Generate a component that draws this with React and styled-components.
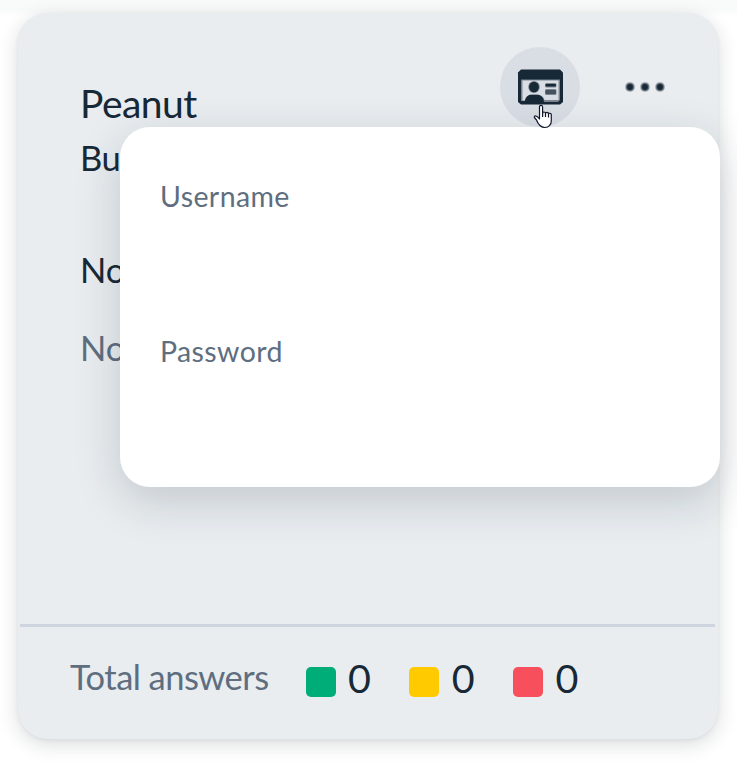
import React, { memo } from 'react';
import styled, { createGlobalStyle } from 'styled-components';

const Colors = {
  INK: '#172836',
  MUTED: '#5e6e7f',
  CARD: '#e9edf0',
  LINE: '#ced5de',
};

const GlobalStyle = createGlobalStyle`
  body {
    margin: 0;
    background: linear-gradient(#f9fafa 0, #f9fafa 10px, #fff 16px);
    font-family: Lato, 'Open Sans', sans-serif;
    overflow: hidden;
  }
`;

const Page = styled.div`
  box-sizing: border-box;
  width: 737px;
  height: 762px;
  padding: 13px 19px 23px 18px;
  overflow: hidden;
`;

const Card = styled.div`
  box-sizing: border-box;
  position: relative;
  display: flex;
  flex-direction: column;
  height: 726px;
  border-radius: 30px;
  background-color: ${Colors.CARD};
  box-shadow: 0 5px 20px rgba(20, 30, 40, 0.16), 0 1px 4px rgba(20, 30, 40, 0.06);
`;

const Header = styled.div`
  display: flex;
  height: 80px;
  padding: 34px 42px 0 62px;
`;

const Text = styled.div`
  font-size: ${p => p.$size}px;
  line-height: ${p => p.$line || 48}px;
  letter-spacing: ${p => p.$spacing || 0}px;
  color: ${p => (p.$muted ? Colors.MUTED : Colors.INK)};
  white-space: nowrap;
`;

const Title = styled(Text)`
  flex-grow: 1;
  padding-top: 31px;
`;

const IconButton = styled.div`
  display: flex;
  align-items: center;
  justify-content: center;
  width: 80px;
  height: 80px;
  border-radius: 50%;
  background-color: ${p => (p.$active ? '#d9dde4' : 'transparent')};
`;

const MenuButton = styled(IconButton)`
  width: 62px;
  margin-left: 34px;
`;

const Details = styled.div`
  flex-grow: 1;
  padding: 7px 62px 0;
`;

const Notes = styled.div`
  display: flex;
  flex-direction: column;
  gap: 30px;
  padding-top: 64px;
`;

const Footer = styled.div`
  box-sizing: border-box;
  display: flex;
  height: 115px;
  margin: 0 3px 0 2px;
  padding: 27px 50px 0;
  border-top: 3px solid ${Colors.LINE};
`;

const Scores = styled.div`
  display: flex;
  gap: 38px;
  padding-left: 37px;
`;

const Score = styled.div`
  display: flex;
  width: 65.7px;
`;

const Swatch = styled.div`
  flex-shrink: 0;
  width: 30px;
  height: 30px;
  margin: 13px 12.5px 0 0;
  border-radius: 5px;
  background-color: ${p => p.$color};
`;

const Popover = styled.div`
  box-sizing: border-box;
  position: absolute;
  top: 114px;
  left: 102px;
  width: 600px;
  height: 360px;
  padding: 45px 40px;
  border-radius: 30px;
  background-color: #fff;
  box-shadow: 0 14px 46px rgba(20, 35, 50, 0.18);
`;

const Field = styled.div`
  height: 155px;
`;

const Pointer = styled.svg`
  position: absolute;
  top: 91px;
  left: 515px;
`;

const ContactIcon = () => (
  <svg width="46" height="37" viewBox="0 0 46 37">
    <path d="M4 0.500H43L46 3.500V33L43 35.500H4L1 33V3.500Z" fill={Colors.INK} />
    <path d="M4 10.500H43V31L41 33H27Q26.500 26 20 25.500H14Q9 26 8 32H4Z" fill="#7b8590" />
    <path d="M5.500 11.500H41.500V31H27.500Q26.500 26.500 21 25.500H13.500Q9 26.500 7.500 31.500H5.500Z" fill="#d9dde4" />
    <ellipse cx="17" cy="18" rx="5.800" ry="5.900" fill="#7b8590" />
    <ellipse cx="17" cy="18" rx="4.900" ry="5.200" fill={Colors.INK} />
    <rect x="28" y="14" width="11.500" height="4.500" rx="1.500" fill="#7b8590" />
    <rect x="28.500" y="15" width="10.500" height="2.500" rx="1" fill={Colors.INK} />
    <rect x="28" y="20" width="11.500" height="6" rx="1.500" fill="#7b8590" />
    <rect x="28.500" y="21" width="10.500" height="4" rx="1" fill="#46535f" />
  </svg>
);

const DotsIcon = () => (
  <svg width="42" height="12" viewBox="0 0 42 12" fill={Colors.INK}>
    {[6, 21, 36].map(x => (
      <g key={x}>
        <circle cx={x} cy="6" r="5" opacity="0.3" />
        <circle cx={x} cy="6" r="4" opacity="0.5" />
        <circle cx={x} cy="6" r="2.900" />
      </g>
    ))}
  </svg>
);

const ScoreItem = memo(({ color, value }) => (
  <Score>
    <Swatch $color={color} />
    <Text $size={39.5}>{value}</Text>
  </Score>
));

const scores = [
  { name: 'green', color: '#00ac78', value: 0 },
  { name: 'yellow', color: '#ffcb00', value: 0 },
  { name: 'red', color: '#f84f5c', value: 0 },
];

export default class App extends React.PureComponent {
  render () {
    return (
      <Page>
        <GlobalStyle />
        <Card>
          <Header>
            <Title $size={39} $line={50} $spacing={-0.5}>Peanut</Title>
            <IconButton $active><ContactIcon /></IconButton>
            <MenuButton><DotsIcon /></MenuButton>
          </Header>
          <Details>
            <Text $size={34.5} $spacing={-0.5}>Bu</Text>
            <Notes>
              <Text $size={34.5}>No</Text>
              <Text $size={34.5} $muted>No</Text>
            </Notes>
          </Details>
          <Footer>
            <Text $size={34.5} $line={45} $spacing={-0.55} $muted>Total answers</Text>
            <Scores>
              {scores.map(({ name, color, value }) => (
                <ScoreItem key={name} color={color} value={value} />
              ))}
            </Scores>
          </Footer>
          <Popover>
            <Field><Text $size={28.5} $spacing={0.4} $muted>Username</Text></Field>
            <Field><Text $size={28.5} $spacing={0.4} $muted>Password</Text></Field>
          </Popover>
          <Pointer width="20" height="25" viewBox="0 0 20 25">
            <path
              d="M6.500 14V3Q6.500 1.300 8 1.300T9.600 3V9.500Q9.600 8 11 8T12.500 9.500Q12.500 8.400 14 8.400T15.500 10Q15.500 9 17 9.300T18.300 11V17Q18.300 20 16.500 21.500Q15 23.500 12 23.500Q9 23.500 7 21.500Q4.500 19 3.500 16L1.400 13.500Q1 11.700 3 12Q4.700 12.500 6.500 15Z"
              fill="#fff"
              stroke="#11182a"
              strokeWidth="1.200"
              strokeLinejoin="round"
            />
            <path d="M9.600 9V13M12.500 9.500V13M15.500 10V13.500" stroke="#11182a" strokeWidth="1.200" />
          </Pointer>
        </Card>
      </Page>
    );
  }
}
